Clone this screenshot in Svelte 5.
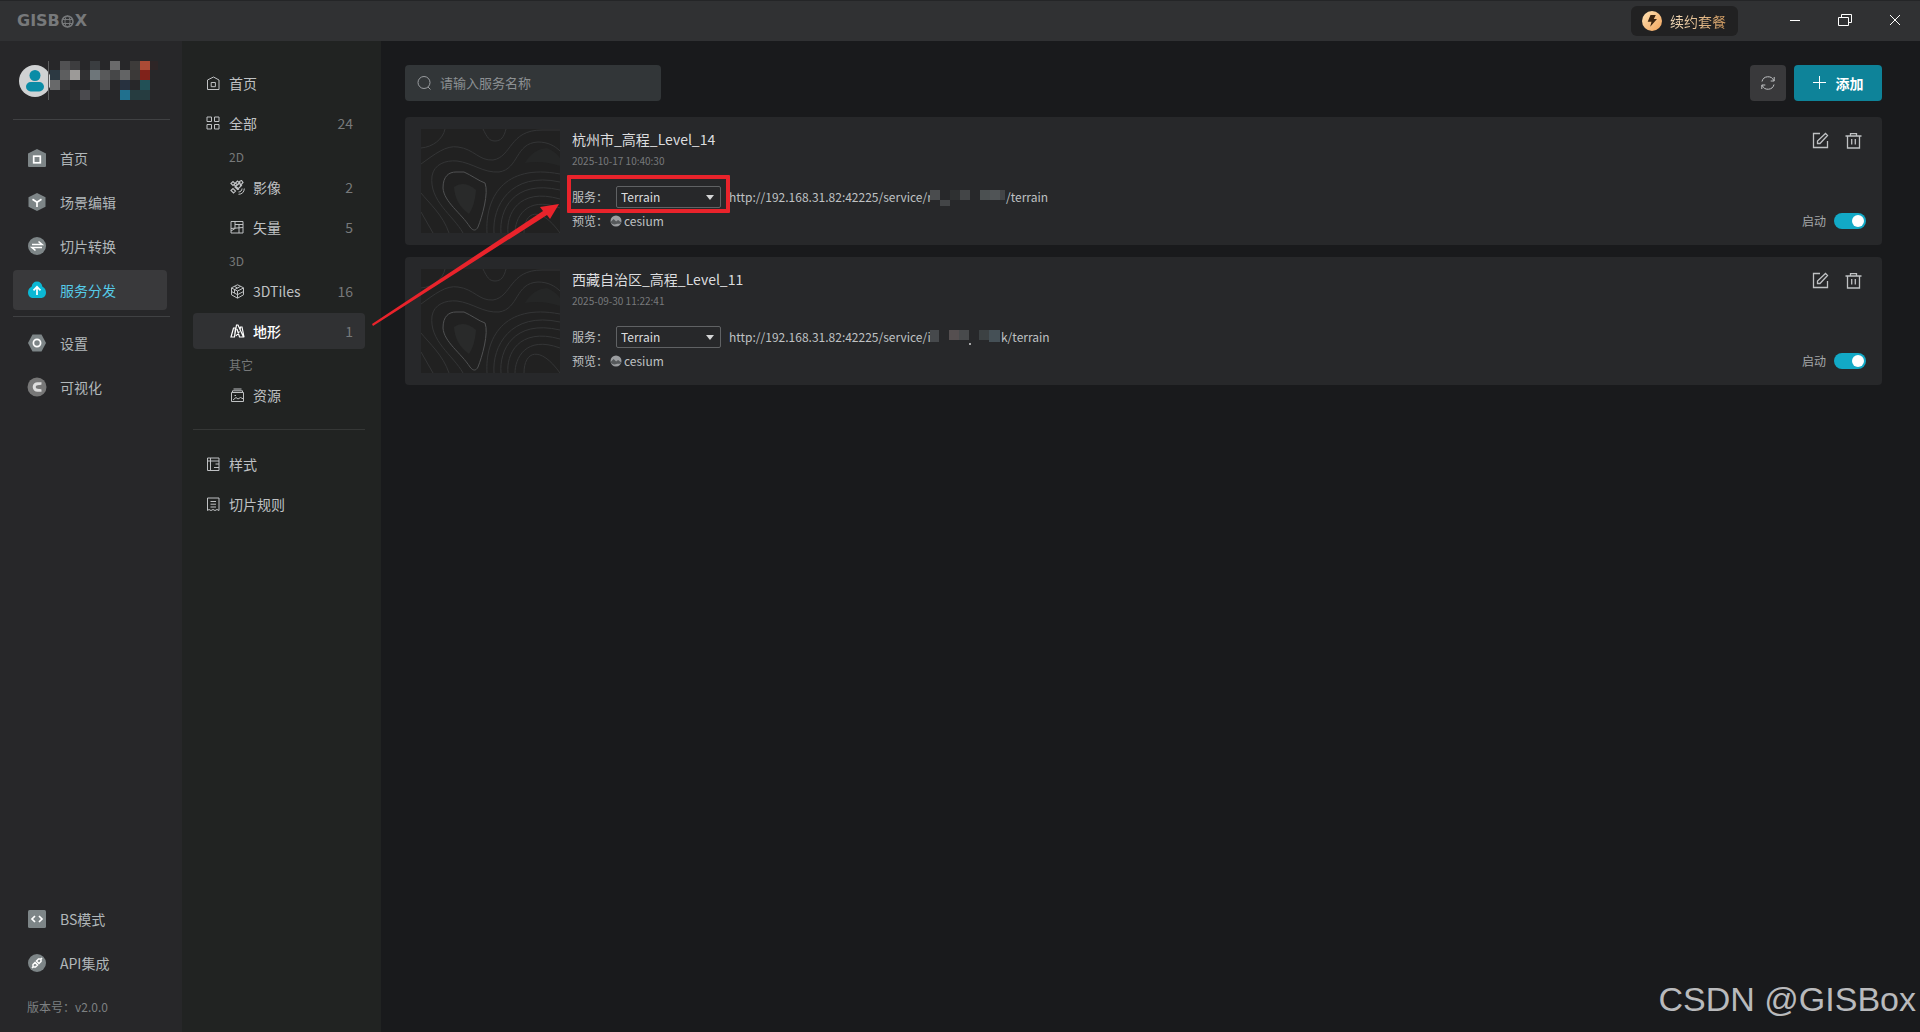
<script lang="ts">
  interface MenuItem {
    icon: string;
    label: string;
    count?: number;
    active?: boolean;
    nested?: boolean;
  }

  interface Block {
    x: number;
    y: number;
    w: number;
    h: number;
    fill: string;
  }

  const solidIcons: Record<string, string> = {
    home: '<path fill="#7d8587" d="M9 0l9 4.500V17a1 1 0 0 1-1 1H1a1 1 0 0 1-1-1V4.500z"/><rect x="5.700" y="7.200" width="6.600" height="6.600" fill="none" stroke="#fff" stroke-width="1.700"/>',
    scene:
      '<path fill="#7d8587" d="M9 0l8.500 4.300v9.400L9 18 .5 13.700V4.300z"/><path fill="none" stroke="#fff" stroke-width="1.700" d="M4.500 6.300L9 9.200l4.500-2.900M9 9v5"/>',
    convert:
      '<circle cx="9" cy="9" r="9" fill="#7d8587"/><path fill="none" stroke="#fff" stroke-width="1.600" d="M4 7.500h10L10.500 4.500M14 10.500H4l3.500 3"/>',
    publish:
      '<path fill="#0bb8d4" d="M9 .5c3 0 5 2 5.300 5C16.800 6.800 18 9 18 11.500c0 3.300-2.200 5.500-5 5.500H5c-2.800 0-5-2.200-5-5.500C0 9 1.200 6.800 3.700 5.500 4 2.500 6 .5 9 .5z"/><path fill="none" stroke="#fff" stroke-width="1.700" d="M9 14V6M5.500 9.300L9 5.800l3.500 3.500"/>',
    settings:
      '<path fill="#7d8587" d="M4.500.5h9L18 9l-4.500 8.500h-9L0 9z"/><circle cx="9" cy="9" r="3.600" fill="none" stroke="#fff" stroke-width="1.700"/>',
    visual:
      '<circle cx="9" cy="9" r="9.500" fill="#777"/><path fill="none" stroke="#ddd" stroke-width="3" d="M13.500 5.700H9.500a3.300 3.300 0 0 0 0 6.600h4"/><path fill="#777" d="M10 7.500l4-1v2l-3 1 3 1v1l-4-1z"/>',
    code: '<rect width="18" height="18" rx="1.500" fill="#7d8587"/><path fill="none" stroke="#fff" stroke-width="1.700" d="M7 6L4 9l3 3M11 6l3 3-3 3"/>',
    api: '<circle cx="9" cy="9" r="9" fill="#7d8587"/><g fill="none" stroke="#fff" stroke-width="1.500"><path d="M8.500 7l2-2h2.500v2.500l-2 2zM7 8.500L9.500 11l-2 2H5v-2.500zM12.500 5.500L14 4M5.500 12.500L4 14"/></g>'
  };

  const lineIcons: Record<string, string> = {
    home: '<path d="M1.500 4L7.500 1l5.500 3v9.500H1.500z"/><path d="M5.200 6.500h4.200v4.200H5.200z"/>',
    grid: '<path d="M1 1h4.500v4.500H1zM8.500 1H13v4.500H8.500zM1 8.500h4.500V13H1zM8.500 8.500H13V13H8.500z"/>',
    satellite:
      '<path stroke-width="1.200" d="M5.500 3l2-2 2 2-2 2zM1 3.500l2-2 2 2-2 2zM4 4.500L9 9.500M9.500 1.500l2-1 1.500 2-2.500 3zM5 7l4-4 2.500 2.500-4 4zM1 10.500l2-2L5.500 11l-2 2z"/><path d="M8.500 12c2 0 3.500-1.500 3.500-3.500M8.500 14.300c3.500 0 5.800-2.300 5.800-5.800"/>',
    vector: '<path d="M1 1.500h12v11.500H1zM1 8.500l12-1M5 1.500V8.500M9 4v9M5 4.500h8M1 11l4-2.500"/>',
    cube: '<path d="M7.500.8l6 3v7l-6 3.400-6-3.400v-7zM1.500 4l6 3 6-3M7.500 7v7M10.500 2.400L4.500 5.600v3.500M4.500 2.400L7.500 4M1.500 7.500l6 3.200 6-3.200"/>',
    terrain:
      '<path stroke-width="1.200" d="M1 13L3.500 4h2L4.500 13zM4.500 13L6.500 1H8l5.500 12h-4L7 5M6 12l3.500-4.500M10 6l.5-3h1.500l2 10"/>',
    resource:
      '<path d="M1.500 4.500h12v9h-12zM3.500 1h8M2.500 4.500V2.800h10v1.700M3 12l3-2.500 2 1.500 2.500-1.500 3 1.500M4.500 7.500h1.500"/>',
    style: '<path d="M1.500 1h11.500v12.500H1.500zM4.500 1v12.500M1.500 4H13M9.500 7H13M8 10.500h5"/>',
    rule: '<path d="M1.500 1h11.500v12.500l-2-1-2 1-2-1-2 1-2-1-1.500 1zM4.500 4.500h5.500M4.500 7.200h5.500M4.500 10h5.500"/>'
  };

  const mainMenu: MenuItem[] = [
    { icon: 'home', label: '首页' },
    { icon: 'scene', label: '场景编辑' },
    { icon: 'convert', label: '切片转换' },
    { icon: 'publish', label: '服务分发', active: true }
  ];
  const systemMenu: MenuItem[] = [
    { icon: 'settings', label: '设置' },
    { icon: 'visual', label: '可视化' }
  ];
  const footerMenu: MenuItem[] = [
    { icon: 'code', label: 'BS模式' },
    { icon: 'api', label: 'API集成' }
  ];

  const groups: { title?: string; items: MenuItem[] }[] = [
    {
      items: [
        { icon: 'home', label: '首页' },
        { icon: 'grid', label: '全部', count: 24 }
      ]
    },
    {
      title: '2D',
      items: [
        { icon: 'satellite', label: '影像', count: 2, nested: true },
        { icon: 'vector', label: '矢量', count: 5, nested: true }
      ]
    },
    {
      title: '3D',
      items: [
        { icon: 'cube', label: '3DTiles', count: 16, nested: true },
        { icon: 'terrain', label: '地形', count: 1, nested: true, active: true }
      ]
    },
    { title: '其它', items: [{ icon: 'resource', label: '资源', nested: true }] }
  ];
  const ruleMenu: MenuItem[] = [
    { icon: 'style', label: '样式' },
    { icon: 'rule', label: '切片规则' }
  ];

  const avatarBlocks: Block[] = [
    { x: 0, y: 0, w: 1, h: 39, fill: '#5c5d5e' },
    { x: 12, y: 0, w: 10, h: 9, fill: '#515153' },
    { x: 22, y: 0, w: 10, h: 9, fill: '#3d3d3f' },
    { x: 42, y: 0, w: 10, h: 9, fill: '#3a3d40' },
    { x: 62, y: 0, w: 10, h: 9, fill: '#6a6a6b' },
    { x: 82, y: 0, w: 10, h: 9, fill: '#3d3b3a' },
    { x: 92, y: 0, w: 10, h: 9, fill: '#ab4b36' },
    { x: 102, y: 0, w: 8, h: 9, fill: '#2e2526' },
    { x: 2, y: 9, w: 10, h: 10, fill: '#2c3942' },
    { x: 12, y: 9, w: 10, h: 10, fill: '#5d5e5f' },
    { x: 22, y: 9, w: 10, h: 10, fill: '#9c9a98' },
    { x: 32, y: 9, w: 10, h: 10, fill: '#303032' },
    { x: 42, y: 9, w: 10, h: 10, fill: '#6e767a' },
    { x: 52, y: 9, w: 10, h: 10, fill: '#58595a' },
    { x: 62, y: 9, w: 10, h: 10, fill: '#464748' },
    { x: 72, y: 9, w: 10, h: 10, fill: '#636465' },
    { x: 82, y: 9, w: 10, h: 10, fill: '#3b3938' },
    { x: 92, y: 9, w: 10, h: 10, fill: '#80221a' },
    { x: 2, y: 19, w: 10, h: 10, fill: '#68696a' },
    { x: 12, y: 19, w: 10, h: 10, fill: '#343436' },
    { x: 42, y: 19, w: 10, h: 10, fill: '#303032' },
    { x: 52, y: 19, w: 10, h: 10, fill: '#4b4c4e' },
    { x: 72, y: 19, w: 10, h: 10, fill: '#27313f' },
    { x: 92, y: 19, w: 10, h: 10, fill: '#225056' },
    { x: 22, y: 29, w: 10, h: 10, fill: '#2d2d2f' },
    { x: 32, y: 29, w: 10, h: 10, fill: '#4a4a4e' },
    { x: 42, y: 29, w: 10, h: 10, fill: '#303032' },
    { x: 72, y: 29, w: 10, h: 10, fill: '#20708e' },
    { x: 82, y: 29, w: 20, h: 10, fill: '#263c40' }
  ];

  let services = $state([
    {
      name: '杭州市_高程_Level_14',
      time: '2025-10-17 10:40:30',
      urlStart: 'http://192.168.31.82:42225/service/r',
      urlEnd: '/terrain',
      enabled: true,
      marked: true,
      blocks: [
        { x: 0, y: 0, w: 10, h: 10, fill: '#4a4c4e' },
        { x: 10, y: 10, w: 10, h: 6, fill: '#434547' },
        { x: 20, y: 0, w: 10, h: 10, fill: '#2e3031' },
        { x: 30, y: 0, w: 10, h: 10, fill: '#434547' },
        { x: 50, y: 0, w: 10, h: 10, fill: '#4b5051' },
        { x: 60, y: 0, w: 10, h: 10, fill: '#505456' },
        { x: 70, y: 0, w: 5, h: 10, fill: '#434547' }
      ]
    },
    {
      name: '西藏自治区_高程_Level_11',
      time: '2025-09-30 11:22:41',
      urlStart: 'http://192.168.31.82:42225/service/i',
      urlEnd: 'k/terrain',
      enabled: true,
      marked: false,
      blocks: [
        { x: 1, y: 0, w: 9, h: 12, fill: '#46494c' },
        { x: 20, y: 0, w: 10, h: 10, fill: '#554f50' },
        { x: 30, y: 0, w: 10, h: 10, fill: '#484a4c' },
        { x: 40, y: 13, w: 2, h: 2, fill: '#a5a6a7' },
        { x: 50, y: 0, w: 10, h: 10, fill: '#3c4143' },
        { x: 60, y: 0, w: 11, h: 12, fill: '#455056' }
      ]
    }
  ]);

  let keyword = $state('');
</script>

{#snippet navLink(item: MenuItem)}
  <a href="#{item.icon}" class="navLink" class:active={item.active}>
    <svg width="18" height="18" viewBox="0 0 18 18" overflow="visible">{@html solidIcons[item.icon]}</svg>
    {item.label}
  </a>
{/snippet}

{#snippet subLink(item: MenuItem)}
  <a href="#{item.icon}" class="subLink" class:nested={item.nested} class:active={item.active}>
    <svg class="lineIcon" width="15" height="15" viewBox="0 0 15 15">{@html lineIcons[item.icon]}</svg>
    <span>{item.label}</span>
    {#if item.count}
      <span class="count">{item.count}</span>
    {/if}
  </a>
{/snippet}

{#snippet mosaic(blocks: Block[], width: number, height: number)}
  <svg class="mosaic" {width} {height} overflow="visible" shape-rendering="crispEdges">
    {#each blocks as b}
      <rect x={b.x} y={b.y} width={b.w} height={b.h} fill={b.fill} />
    {/each}
  </svg>
{/snippet}

<div class="app">
  <header class="titleBar">
    <div class="logo">
      GISB<svg width="15" height="13" viewBox="0 0 15 13">
        <g fill="none" stroke="currentColor">
          <circle cx="7.500" cy="6.500" r="5.500" stroke-width="1.500" />
          <ellipse cx="7.500" cy="6.500" rx="2.500" ry="5.500" />
          <path d="M2 4.500h11M2 8.500h11" />
        </g>
      </svg>X
    </div>
    <button class="planButton">
      <svg width="20" height="20" viewBox="0 0 20 20">
        <defs>
          <linearGradient id="gold" x1="0" y1="0" x2="1" y2="1">
            <stop offset="0" stop-color="#ffe3b5" />
            <stop offset="1" stop-color="#f2a45c" />
          </linearGradient>
        </defs>
        <circle cx="10" cy="10" r="10" fill="url(#gold)" />
        <path fill="#3a2310" d="M8.500 4h5.300l-2 4h3.200l-6.800 7.700 1.300-5H5.700z" />
      </svg>
      <span>续约套餐</span>
    </button>
    <div class="windowButtons">
      <button aria-label="最小化"><svg width="14" height="14"><path d="M2 6.500h10" /></svg></button>
      <button aria-label="还原"
        ><svg width="14" height="14"><path d="M.5 3.500h10v8H.5zM3.500 3.500v-3h10v8h-3" /></svg></button
      >
      <button aria-label="关闭"><svg width="14" height="14"><path d="M2 1l10 10M12 1L2 11" /></svg></button>
    </div>
  </header>

  <div class="body">
    <nav class="sidebar">
      <div class="user">
        <svg width="32" height="32" viewBox="0 0 32 32">
          <circle cx="16" cy="16" r="16" fill="#d0d2d3" />
          <circle cx="16" cy="10.500" r="5.500" fill="#0a8ca6" />
          <rect x="7" y="17" width="18" height="9.500" rx="4.700" fill="#0a8ca6" />
        </svg>
        {@render mosaic(avatarBlocks, 112, 39)}
      </div>
      <div class="navGroup top">
        {#each mainMenu as item}
          {@render navLink(item)}
        {/each}
      </div>
      <div class="navGroup">
        {#each systemMenu as item}
          {@render navLink(item)}
        {/each}
      </div>
      <div class="navFooter">
        {#each footerMenu as item}
          {@render navLink(item)}
        {/each}
        <div class="version">版本号：v2.0.0</div>
      </div>
    </nav>

    <nav class="subbar">
      {#each groups as group}
        {#if group.title}
          <div class="groupTitle">{group.title}</div>
        {/if}
        <div class="subGroup">
          {#each group.items as item}
            {@render subLink(item)}
          {/each}
        </div>
      {/each}
      <div class="subGroup rules">
        {#each ruleMenu as item}
          {@render subLink(item)}
        {/each}
      </div>
    </nav>

    <main>
      <div class="toolbar">
        <label class="search">
          <svg class="lineIcon" width="16" height="16" viewBox="0 0 16 16">
            <circle cx="7" cy="7.500" r="6" /><path d="M11 12l2.500 2.500" />
          </svg>
          <input type="text" aria-label="服务名称" placeholder="请输入服务名称" bind:value={keyword} />
        </label>
        <button class="refreshButton" aria-label="刷新">
          <svg class="lineIcon" width="16" height="16" viewBox="0 0 16 16">
            <path d="M2 6.500A6.200 6.200 0 0 1 13.800 5.700M14.200 2v4h-3.500M14 9.500A6.200 6.200 0 0 1 2.200 10.300M1.800 14v-4h3.500" />
          </svg>
        </button>
        <button class="addButton">
          <svg width="14" height="14" viewBox="0 0 14 14"><path stroke="#fff" d="M6.500 0v13M0 6.500h13" /></svg>
          添加
        </button>
      </div>

      {#each services as service}
        <article class="card">
          <svg class="thumb" width="139" height="104" viewBox="0 0 139 104">
            <rect width="139" height="104" fill="#212121" />
            <g fill="none" stroke="#343536">
              <path d="M0 19C12 18 22 10 24 0M62 0c4 8 6 12 12 12s9-4 11-12" />
              <path d="M0 35C14 25 25 16 37 18c16 2 21 14 35 13C91 28 88 1 121 1h18" />
              <path d="M42 104C32 86 8 72 11 47 13 35 25 31 36 32c16 2 26 12 42 11C98 40 94 14 117 13c10 0 17 4 22 9" />
              <path d="M0 64c8 10 22 22 28 40M0 83l12 21" />
              <path d="M66 104C64 70 82 34 139 45" />
              <path d="M73 104c-2-26 16-62 66-51" />
              <path d="M80 104c-2-22 12-54 59-43" />
              <path d="M87 104c-2-18 10-46 52-34" />
              <path d="M94 104c0-14 10-38 45-25" />
              <path d="M103 104c0-22 16-28 36 0" />
            </g>
            <path
              fill="none"
              stroke="#505152"
              d="M22 59c0-12 6-16 13-16h8c7 3 15 9 21 11 4 10-3 34-7 44-2 4-5 4-8 0-9-14-26-25-27-39z"
            />
            <path fill="#292a2a" d="M33 58q10-7 22 3-1 15-7 24-14-10-15-27z" />
            <path fill="#252626" d="M104 34q8-14 22-15 9 4 13 10v8q-18-6-35-3z" />
          </svg>
          <div class="info">
            <h2>{service.name}</h2>
            <time>{service.time}</time>
            <div class="serviceRow">
              <label class="picker">
                服务：
                <span class="selectWrap">
                  <select>
                    <option>Terrain</option>
                  </select>
                </span>
              </label>
              <span class="url"
                >{service.urlStart}{@render mosaic(service.blocks, service.marked ? 76 : 72, 14)}{service.urlEnd}</span
              >
              {#if service.marked}
                <div class="redBox"></div>
                <svg class="arrow" width="188" height="124" viewBox="0 0 188 124">
                  <path fill="#e9232b" d="M0 121L171 8l-3-4 19-3-9 15-3-4L1 123z" />
                </svg>
              {/if}
            </div>
            <div class="previewRow">
              预览：
              <a href="#cesium">
                <svg width="12" height="12" viewBox="0 0 12 12">
                  <circle cx="6" cy="6" r="5.500" fill="#9b9da0" />
                  <path fill="#55585a" d="M.6 7l3-3 2.500 2.500 2-1.500 3.200 2.500C10 10 8 8 6.500 9 4 10 1.500 9 .6 7z" />
                </svg>cesium</a
              >
            </div>
          </div>
          <div class="side">
            <div class="actions">
              <button aria-label="编辑">
                <svg class="lineIcon" width="17" height="17" viewBox="0 0 17 17">
                  <path stroke-width="1.300" d="M8 1.500H1.500v14h14V9M5.500 11.500V9l8-7.500 2 2-7.500 8z" />
                </svg>
              </button>
              <button aria-label="删除">
                <svg class="lineIcon" width="17" height="17" viewBox="0 0 17 17">
                  <path stroke-width="1.300" d="M.5 4h16M5.500 4V1.700h6V4M2.500 4v12h12V4M6.700 7v5.500M10.300 7v5.500" />
                </svg>
              </button>
            </div>
            <label class="toggle">
              启动
              <input type="checkbox" role="switch" bind:checked={service.enabled} />
            </label>
          </div>
        </article>
      {/each}
    </main>
  </div>

  <div class="watermark">CSDN @GISBox</div>
</div>

<style>
  :global(body) {
    background-color: #191a1c;
  }

  .app {
    position: relative;
    display: flex;
    flex-direction: column;
    min-height: 100vh;
    overflow: hidden;

    color: #bfc1c3;
    font-family: 'Noto Sans CJK SC', sans-serif;
    font-size: 14px;
    line-height: 20px;
  }

  .app :is(button, input, select) {
    border: 0;
    margin: 0;
    padding: 0;
    background: none;

    color: inherit;
    font: inherit;
  }

  a {
    color: inherit;
    text-decoration: none;
  }

  svg {
    flex: none;
  }

  .lineIcon {
    fill: none;
    stroke: currentColor;
  }

  .titleBar {
    display: flex;
    align-items: center;
    box-sizing: border-box;
    height: 41px;
    padding-left: 17px;
    border-top: 1px solid #242527;

    background-color: #303133;
  }

  .logo {
    display: flex;
    align-items: center;
    margin-right: auto;

    color: #77797b;
    font-family: 'DejaVu Sans', sans-serif;
    font-size: 16px;
    font-weight: bold;
  }

  .app .planButton {
    display: flex;
    align-items: center;
    gap: 8px;
    height: 30px;
    padding: 0 12px 0 11px;
    border-radius: 6px;
    margin-right: 32px;

    background-color: #212122;
  }

  .planButton span {
    background: linear-gradient(90deg, #f5dfbe, #d29b5f);
    background-clip: text;

    color: transparent;
  }

  .windowButtons {
    display: flex;
  }

  .windowButtons button {
    display: grid;
    place-items: center;
    width: 50px;
    height: 40px;
  }

  .windowButtons path {
    fill: none;
    stroke: #fff;
  }

  .body {
    display: flex;
    flex: 1;
  }

  .sidebar {
    display: flex;
    flex-direction: column;
    box-sizing: border-box;
    width: 182px;
    padding: 20px 12px 5px 13px;

    background-color: #272729;
  }

  .user {
    display: flex;
    align-items: center;
    height: 39px;
    padding: 0 0 19px 6px;
    border-bottom: 1px solid #404143;
  }

  .user .mosaic {
    margin-left: -3px;
  }

  .navGroup {
    display: flex;
    flex-direction: column;
    gap: 4px;
    padding: 6px 0;
  }

  .navGroup.top {
    padding-top: 18px;
    border-bottom: 1px solid #404143;
  }

  .navLink {
    display: flex;
    align-items: center;
    gap: 14px;
    height: 40px;
    padding-left: 15px;
    border-radius: 4px;
    margin-right: 3px;

    color: #b1b7ba;
  }

  .navLink.active {
    background-color: #39393b;

    color: #55cbe8;
  }

  .navFooter {
    display: flex;
    flex-direction: column;
    gap: 4px;
    margin-top: auto;
  }

  .version {
    padding: 10px 14px;

    color: #7d8082;
    font-size: 12px;
  }

  .subbar {
    box-sizing: border-box;
    width: 199px;
    padding: 24px 16px 24px 11px;

    background-color: #212322;
  }

  .subGroup {
    display: flex;
    flex-direction: column;
    gap: 4px;
  }

  .rules {
    padding-top: 16px;
    border-top: 1px solid #353736;
    margin-top: 16px;
  }

  .groupTitle {
    height: 24px;
    padding: 4px 0 0 36px;

    color: #77797a;
    font-size: 12px;
    line-height: 24px;
  }

  .subLink {
    display: flex;
    align-items: center;
    gap: 8px;
    height: 36px;
    padding: 0 12px 0 13px;
    border-radius: 4px;
  }

  .subLink.nested {
    padding-left: 37px;
  }

  .subLink.active {
    background-color: #303133;

    color: #fff;
    font-weight: 500;
  }

  .count {
    margin-left: auto;

    color: #77797a;
    font-weight: 400;
  }

  main {
    display: flex;
    flex: 1;
    flex-direction: column;
    gap: 12px;
    padding: 24px 38px 24px 24px;
  }

  .toolbar {
    display: flex;
    gap: 8px;
    margin-bottom: 4px;
  }

  .search {
    display: flex;
    align-items: center;
    gap: 7px;
    box-sizing: border-box;
    width: 256px;
    height: 36px;
    padding: 0 12px;
    border-radius: 4px;
    margin-right: auto;

    background-color: #323638;

    color: #9a9da0;
    font-size: 13px;
  }

  .search input {
    flex: 1;
    min-width: 0;
    outline: 0;
  }

  .search input::placeholder {
    color: #8c9093;
    opacity: 1;
  }

  .app .refreshButton {
    display: grid;
    place-items: center;
    width: 36px;
    border-radius: 4px;

    background-color: #39393b;
  }

  .app .addButton {
    display: flex;
    align-items: center;
    justify-content: center;
    gap: 9px;
    width: 88px;
    border-radius: 4px;

    background-color: #0e8399;

    color: #fff;
    font-weight: bold;
  }

  .card {
    display: flex;
    gap: 12px;
    padding: 12px 16px;
    border-radius: 4px;

    background-color: #27282a;
  }

  .info {
    flex: 1;
  }

  h2 {
    margin: 0;

    color: #dcdddf;
    font-size: 14px;
    font-weight: 400;
    line-height: 20px;
  }

  time {
    display: block;

    color: #77797b;
    font-size: 10px;
    line-height: 24px;
  }

  .serviceRow,
  .picker,
  .toggle {
    display: flex;
    align-items: center;
  }

  .serviceRow {
    position: relative;
    gap: 8px;
    margin-top: 13px;

    font-size: 12px;
  }

  .picker {
    gap: 8px;
  }

  .selectWrap {
    display: block;
    position: relative;
  }

  .selectWrap::after {
    content: '';
    position: absolute;
    top: 9px;
    right: 7px;
    border: 4px solid transparent;
    border-top: 5px solid #d5d6d7;
    border-bottom: 0;
    pointer-events: none;
  }

  .app select {
    display: block;
    appearance: none;
    width: 105px;
    height: 22px;
    padding: 0 4px;
    border: 1px solid #606264;
    border-radius: 2px;

    color: #dcdddf;
  }

  .url {
    display: flex;
    align-items: center;
  }

  .url .mosaic {
    margin-left: -2px;
  }

  .redBox {
    position: absolute;
    top: -11px;
    left: -5px;
    box-sizing: border-box;
    width: 163px;
    height: 38px;
    border: 4px solid #e9232b;
    border-radius: 1px;
  }

  .arrow {
    position: absolute;
    top: 17px;
    left: -200px;
    z-index: 1;
  }

  .previewRow,
  .previewRow a {
    display: flex;
    align-items: center;
  }

  .previewRow {
    gap: 2px;
    margin-top: 3px;

    font-size: 12px;
  }

  .previewRow a {
    gap: 2px;
  }

  .side {
    display: flex;
    flex-direction: column;
    justify-content: space-between;
    align-items: flex-end;
    padding: 1px 0 2px;
  }

  .actions {
    display: flex;
    gap: 16px;
    padding-right: 4px;
  }

  .actions button {
    display: block;
    height: 24px;
  }

  .toggle {
    gap: 8px;

    color: #a5a7a9;
    font-size: 12px;
  }

  .app .toggle input {
    display: block;
    appearance: none;
    box-sizing: border-box;
    width: 32px;
    height: 16px;
    padding: 2px;
    border-radius: 8px;

    background-color: #55585a;
  }

  .app .toggle input::before {
    content: '';
    display: block;
    width: 12px;
    height: 12px;
    border-radius: 50%;

    background-color: #fff;
  }

  .app .toggle input:checked {
    background-color: #12a9c6;
  }

  .app .toggle input:checked::before {
    margin-left: auto;
  }

  .watermark {
    position: absolute;
    right: 4px;
    bottom: 13px;

    color: #b9babc;
    font-family: 'Liberation Sans', sans-serif;
    font-size: 34px;
    line-height: 40px;
  }
</style>
